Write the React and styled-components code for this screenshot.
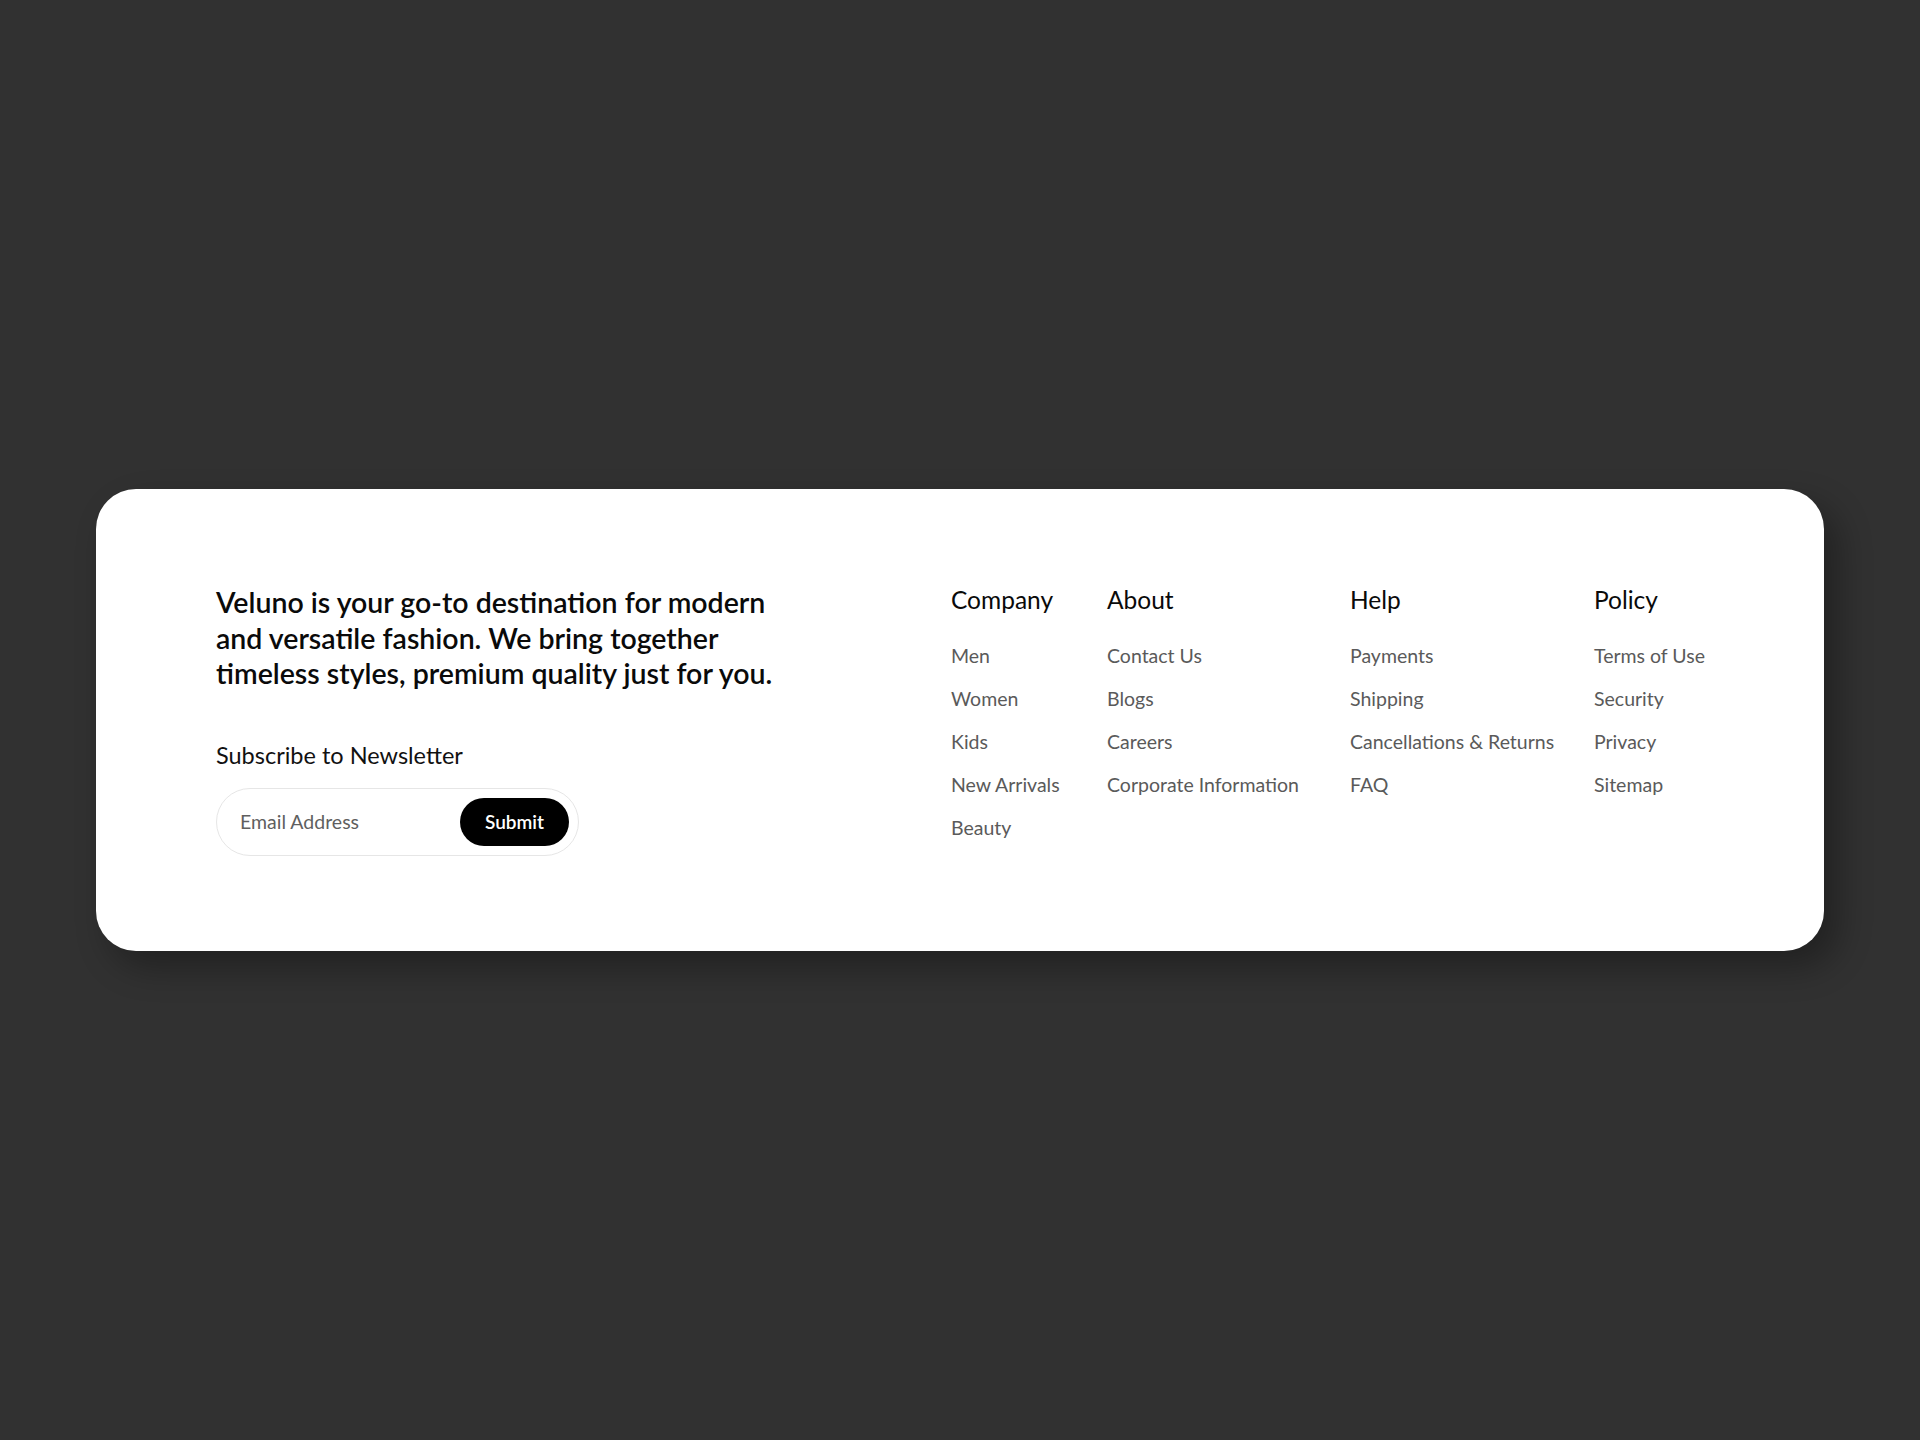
import styled, { createGlobalStyle } from 'styled-components';

const GlobalStyle = createGlobalStyle`
  html, body {
    margin: 0;
    padding: 0;
    background: #313131;
  }
  body {
    font-family: Lato, "Noto Sans", sans-serif;
  }
`;

const columns = [
  { title: 'Company', width: 156, links: ['Men', 'Women', 'Kids', 'New Arrivals', 'Beauty'] },
  { title: 'About', width: 243, links: ['Contact Us', 'Blogs', 'Careers', 'Corporate Information'] },
  { title: 'Help', width: 244, links: ['Payments', 'Shipping', 'Cancellations & Returns', 'FAQ'] },
  { title: 'Policy', width: 110, links: ['Terms of Use', 'Security', 'Privacy', 'Sitemap'] },
];

const App = () => {
  return (
    <Page>
      <GlobalStyle />
      <Footer>
        <Intro>
          <Tagline>
            Veluno is your go-to destination for modern and versatile fashion. We bring together
            timeless styles, premium quality just for you.
          </Tagline>
          <SubscribeLabel>Subscribe to Newsletter</SubscribeLabel>
          <SubscribeForm onSubmit={(e) => e.preventDefault()}>
            <EmailInput type="email" placeholder="Email Address" />
            <SubmitButton type="submit">Submit</SubmitButton>
          </SubscribeForm>
        </Intro>

        <Nav>
          {columns.map((col) => (
            <Column key={col.title} $width={col.width}>
              <ColumnTitle>{col.title}</ColumnTitle>
              <LinkList>
                {col.links.map((link) => (
                  <li key={link}>
                    <FooterLink href="#">{link}</FooterLink>
                  </li>
                ))}
              </LinkList>
            </Column>
          ))}
        </Nav>
      </Footer>
    </Page>
  );
};

const Page = styled.main`
  min-height: 1440px;
  display: flex;
  align-items: center;
  justify-content: center;
`;

const Footer = styled.footer`
  width: 1728px;
  box-sizing: border-box;
  padding: 96px 120px 95px;
  background: #ffffff;
  border-radius: 40px;
  box-shadow: 14px 16px 34px rgba(0, 0, 0, 0.32);
  display: flex;
  justify-content: space-between;
  align-items: flex-start;
`;

const Intro = styled.div`
  display: flex;
  flex-direction: column;
  align-items: flex-start;
  width: 580px;
`;

const Tagline = styled.p`
  margin: 0;
  font-size: 28.5px;
  line-height: 35.5px;
  font-weight: 600;
  color: #0a0a0a;
  width: 572px;
`;

const SubscribeLabel = styled.h4`
  margin: 48px 0 0;
  font-size: 23.5px;
  line-height: 30px;
  font-weight: 400;
  color: #111;
`;

const SubscribeForm = styled.form`
  margin-top: 18px;
  width: 363px;
  height: 68px;
  box-sizing: border-box;
  border: 1.5px solid #e6e6e6;
  border-radius: 34px;
  display: flex;
  align-items: center;
  padding: 0 9px 0 21px;
`;

const EmailInput = styled.input`
  flex: 1;
  min-width: 0;
  border: none;
  outline: none;
  background: transparent;
  font-family: inherit;
  font-size: 19.5px;
  color: #333;

  &::placeholder {
    color: #5f5f5f;
  }
`;

const SubmitButton = styled.button`
  width: 109px;
  height: 48px;
  border: none;
  border-radius: 24px;
  background: #000;
  color: #fff;
  font-family: inherit;
  font-size: 19px;
  font-weight: 600;
  cursor: pointer;
`;

const Nav = styled.nav`
  display: flex;
  align-items: flex-start;
`;

const Column = styled.div`
  width: ${(p) => p.$width}px;
  flex-shrink: 0;
`;

const ColumnTitle = styled.h3`
  margin: 0;
  font-size: 24.5px;
  line-height: 30px;
  font-weight: 400;
  color: #0a0a0a;
  white-space: nowrap;
`;

const LinkList = styled.ul`
  list-style: none;
  margin: 29px 0 0;
  padding: 0;
  display: flex;
  flex-direction: column;
  gap: 19px;
`;

const FooterLink = styled.a`
  display: block;
  font-size: 19.5px;
  line-height: 24px;
  color: #5a5a5a;
  text-decoration: none;
  white-space: nowrap;

  &:hover {
    color: #000;
  }
`;

export default App;
